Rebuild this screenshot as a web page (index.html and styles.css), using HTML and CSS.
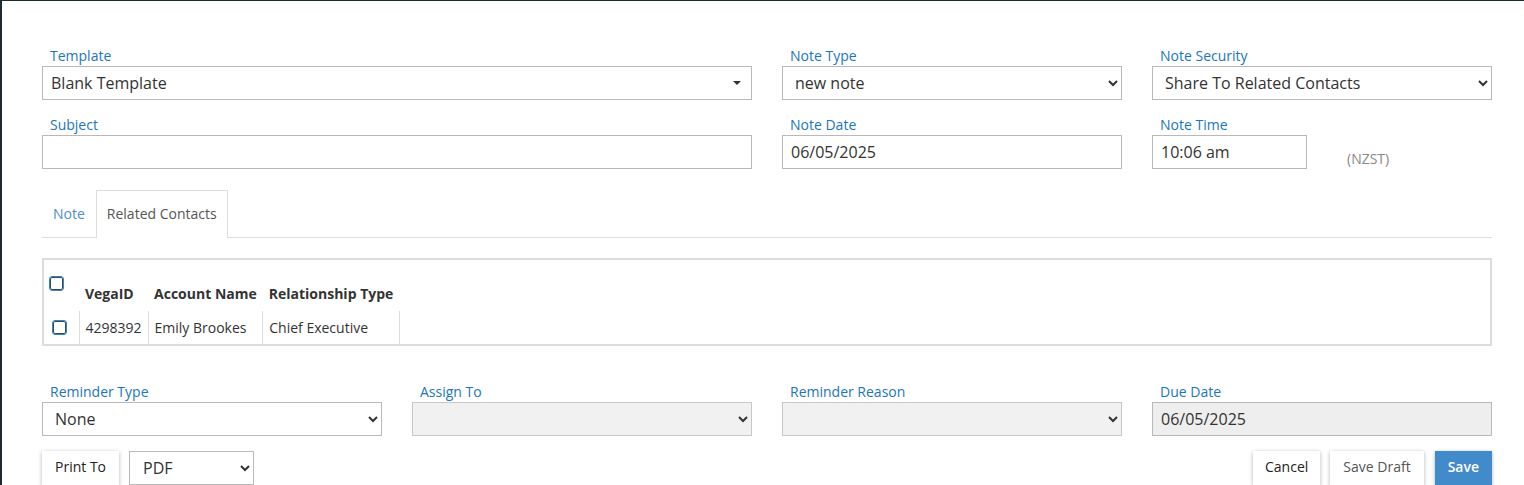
FILE: index.html
```html
<!DOCTYPE html>
<html lang="en">
<head>
    <meta charset="UTF-8">
    <title>New Note</title>
    <link rel="stylesheet" href="styles.css">
</head>
<body>
<div class="modal">
    <!-- top fields -->
    <div class="form-row">
        <div class="field span-2">
            <label>Template</label>
            <div class="fake-select">Blank Template<span class="caret"></span></div>
        </div>
        <div class="field">
            <label>Note Type</label>
            <select><option>new note</option></select>
        </div>
        <div class="field">
            <label>Note Security</label>
            <select><option>Share To Related Contacts</option></select>
        </div>
    </div>
    <div class="form-row">
        <div class="field span-2">
            <label>Subject</label>
            <input type="text" value="">
        </div>
        <div class="field">
            <label>Note Date</label>
            <input type="text" value="06/05/2025">
        </div>
        <div class="field">
            <label>Note Time</label>
            <div class="time-wrap">
                <input class="time" type="text" value="10:06 am">
                <span class="tz">(NZST)</span>
            </div>
        </div>
    </div>

    <!-- tabs -->
    <ul class="tabs">
        <li class="tab">Note</li>
        <li class="tab active">Related Contacts</li>
    </ul>

    <div class="contacts-box">
        <table class="contacts">
            <tr class="head">
                <th class="chk-col"><span class="chk"></span></th>
                <th>VegaID</th>
                <th>Account Name</th>
                <th>Relationship Type</th>
            </tr>
            <tr class="row">
                <td class="chk-col"><span class="chk"></span></td>
                <td>4298392</td>
                <td>Emily Brookes</td>
                <td>Chief Executive</td>
            </tr>
        </table>
    </div>

    <!-- reminder -->
    <div class="form-row reminder">
        <div class="field">
            <label>Reminder Type</label>
            <select><option>None</option></select>
        </div>
        <div class="field">
            <label>Assign To</label>
            <select class="disabled"><option></option></select>
        </div>
        <div class="field">
            <label>Reminder Reason</label>
            <select class="disabled"><option></option></select>
        </div>
        <div class="field">
            <label>Due Date</label>
            <input class="readonly" type="text" value="06/05/2025">
        </div>
    </div>

    <div class="actions">
        <div class="left">
            <button class="btn print">Print To</button>
            <select class="print-sel"><option>PDF</option></select>
        </div>
        <div class="right">
            <button class="btn cancel">Cancel</button>
            <button class="btn draft">Save Draft</button>
            <button class="btn primary">Save</button>
        </div>
    </div>
</div>
</body>
</html>
```

FILE: styles.css
```css
body {
    margin: 0;
    padding: 0;
    background-color: #1c2b2f;
    font-family: "Open Sans", "Liberation Sans", sans-serif;
    color: #333;
    height: 485px;
    overflow: hidden;
}

.modal {
    box-sizing: border-box;
    margin: 1px 0 0 2px;
    background: white;
    padding: 45px 32px 0 40px;
    height: 484px;
    overflow: hidden;
}

.form-row {
    display: grid;
    grid-template-columns: repeat(4, 340px);
    column-gap: 30px;
    margin-bottom: 15px;
}

.span-2 {
    grid-column: span 2;
}

.field label {
    display: block;
    color: #1a76bd;
    font-size: 14px;
    line-height: 20px;
    padding-left: 8px;
}

.field input,
.field select,
.fake-select {
    box-sizing: border-box;
    width: 100%;
    height: 34px;
    border: 1px solid #b9b9b9;
    border-radius: 0;
    background: white;
    font-family: "Open Sans", "Liberation Sans", sans-serif;
    font-size: 16px;
    color: #333;
    padding: 0 8px;
    margin: 0;
    outline: none;
}

.fake-select {
    position: relative;
    line-height: 32px;
}

.caret {
    position: absolute;
    right: 10px;
    top: 14px;
    width: 0;
    height: 0;
    border-left: 4px solid transparent;
    border-right: 4px solid transparent;
    border-top: 4px solid #333;
}

.time-wrap {
    display: flex;
    align-items: flex-end;
}

.field input.time {
    width: 155px;
}

.tz {
    color: #888;
    font-size: 14px;
    margin-left: 40px;
    line-height: 16px;
    padding-bottom: 2px;
}

.tabs {
    list-style: none;
    margin: 21px 0 0 0;
    padding: 0;
    display: flex;
    border-bottom: 1px solid #ddd;
}

.tab {
    font-size: 14px;
    line-height: 20px;
    padding: 13px 10px;
    color: #4a90d0;
    border: 1px solid transparent;
    border-bottom: 0;
    margin-bottom: -1px;
}

.tab.active {
    color: #555;
    border-color: #ddd;
    background: white;
    padding-bottom: 14px;
}

.contacts-box {
    margin-top: 20px;
    border: 2px solid #dcdcdc;
    height: 84px;
}

.contacts {
    border-collapse: collapse;
    font-size: 14px;
}

.contacts th {
    font-weight: bold;
    text-align: left;
    height: 51px;
    padding: 0 6px 7px 6px;
    vertical-align: bottom;
    box-sizing: border-box;
    line-height: 20px;
}

.contacts td {
    height: 33px;
    padding: 0 6px;
    border-left: 1px solid #ddd;
    border-right: 1px solid #ddd;
    line-height: 20px;
}

.contacts .chk-col {
    width: 35px;
    padding: 0;
    box-sizing: border-box;
}

.contacts th.chk-col {
    vertical-align: top;
    padding: 12px 0 0 6px;
}

.contacts td.chk-col {
    border-left: 0;
    padding: 0 0 2px 9px;
}

.chk {
    display: inline-block;
    box-sizing: border-box;
    width: 13px;
    height: 13px;
    border: 1px solid #444;
    outline: 1px solid #2f86d6;
    border-radius: 2px;
    vertical-align: middle;
}

.reminder {
    margin-top: 36px;
    margin-bottom: 15px;
}

.field select.disabled {
    background: #f1f1f1;
    border-color: #c8c8c8;
}

.field input.readonly {
    background: #eee;
    border-color: #b9b9b9;
}

.actions {
    display: flex;
    justify-content: space-between;
    width: 1450px;
}

.left,
.right {
    display: flex;
    gap: 10px;
}

.btn {
    font-family: "Open Sans", "Liberation Sans", sans-serif;
    font-size: 14px;
    line-height: 20px;
    color: #222;
    background: white;
    border: 0;
    height: 34px;
    padding: 0 12px 2px;
    box-shadow: 0 1px 4px rgba(0, 0, 0, 0.3);
}

.btn.print {
    padding: 0 13px 2px;
}

.btn.draft {
    color: #555;
    padding: 0 13px 2px;
    margin-right: 1px;
}

.btn.primary {
    background-color: #428bca;
    color: white;
    font-weight: 600;
    padding: 0 13px 2px;
}

.print-sel {
    box-sizing: border-box;
    width: 125px;
    height: 34px;
    border: 1px solid #b9b9b9;
    border-radius: 0;
    background: white;
    font-family: "Open Sans", "Liberation Sans", sans-serif;
    font-size: 16px;
    color: #333;
    padding: 0 9px;
}
```
